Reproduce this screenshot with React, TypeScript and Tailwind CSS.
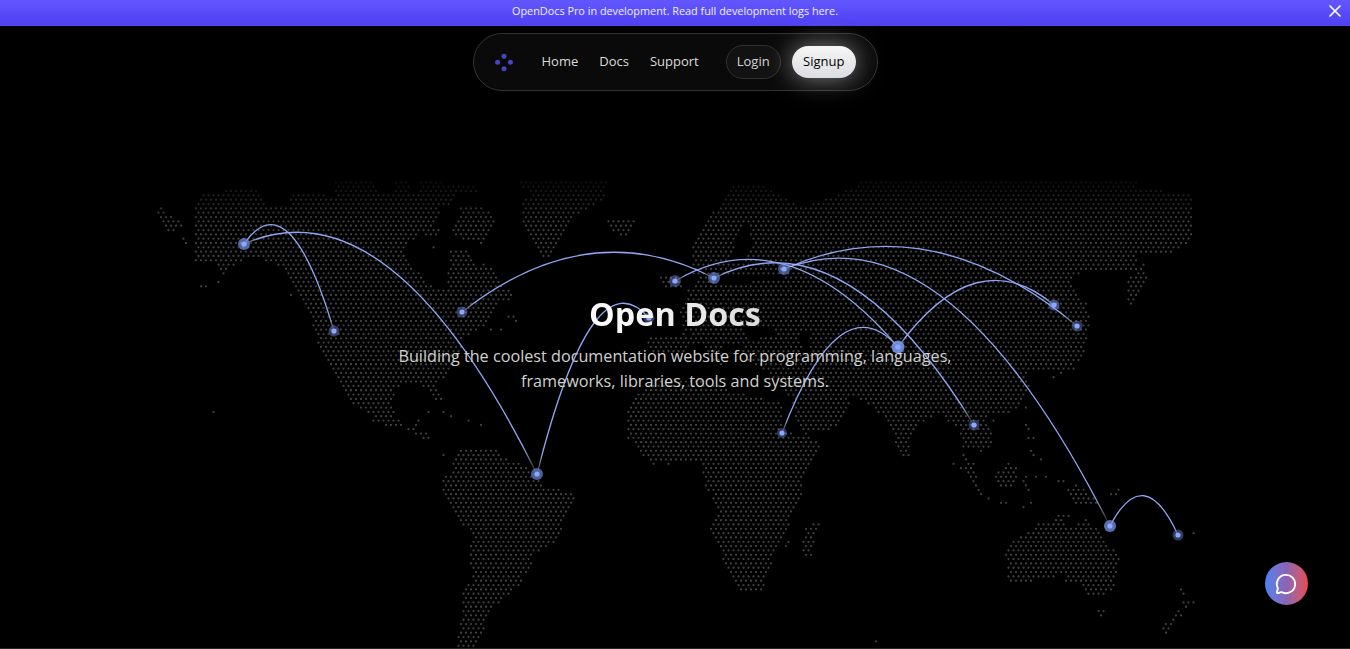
import { MessageCircle, X } from "lucide-react";

type Pt = [number, number];
type View = [number, number, number, number];

const Z8: View = [150, 170, 2.851, 3];
const Z9: View = [600, 170, 2.57, 3];
const Z10: View = [600, 400, 2.57, 3];
const Z6: View = [420, 430, 3, 3];
const Z5: View = [860, 170, 3, 3];
const Z11: View = [620, 180, 3, 3];
const Z12: View = [860, 340, 3, 3];
const S: View = [0, 0, 1, 1];

const P = (v: View, pts: Pt[]): Pt[] => pts.map(([x, y]) => [v[0] + x / v[2], v[1] + y / v[3]]);

const land: Pt[][] = [
  // North America
  P(Z8, [[160,65],[310,60],[330,110],[395,110],[400,70],[500,70],[510,90],[530,85],[530,35],[640,35],[650,70],[690,75],[700,35],[740,35],[745,75],[770,75],[765,35],[930,40],[940,70],[870,75],[850,110],[830,110],[825,135],[800,170],[740,215],[720,235],[760,300],[790,345],[845,355],[850,300],[855,240],[905,240],[930,290],[960,280],[990,320],[1030,370],[1035,400],[1000,400],[960,470],[910,490],[890,520],[880,560],[860,600],[830,630],[815,650],[835,690],[820,695],[790,650],[740,640],[700,655],[690,700],[700,740],[720,765],[760,775],[790,790],[810,800],[780,810],[740,780],[690,770],[640,760],[630,735],[570,700],[530,620],[480,540],[470,480],[450,410],[410,345],[385,295],[310,265],[270,270],[225,290],[215,320],[195,285],[125,270],[130,215],[125,165],[130,100]]),
  P(Z8, [[1015,420],[1060,460],[1040,460],[1020,440]]),
  P(Z8, [[750,745],[780,740],[760,770]]),
  P(Z8, [[780,175],[825,175],[825,205],[780,205]]),
  P(Z8, [[20,100],[40,125],[90,150],[95,165],[70,185],[50,180],[25,150]]),
  // Greenland, Iceland, Baffin
  P(Z8, [[1045,35],[1310,35],[1290,90],[1220,130],[1190,180],[1140,260],[1110,260],[1090,210],[1060,170],[1060,100],[1090,70]]),
  P(Z8, [[1305,150],[1380,150],[1380,175],[1345,205],[1315,180]]),
  P(Z8, [[860,175],[890,130],[880,110],[950,110],[985,145],[960,190],[945,220],[900,210],[860,190]]),
  // South America
  P(Z6, [[110,75],[130,50],[230,60],[265,90],[320,110],[345,140],[370,170],[420,180],[465,195],[460,220],[430,260],[430,295],[410,330],[400,345],[340,370],[335,400],[310,440],[300,465],[270,490],[240,515],[210,540],[195,570],[185,630],[160,660],[110,660],[115,600],[125,560],[130,490],[155,450],[150,380],[155,320],[140,295],[105,255],[85,225],[65,190],[70,150],[95,115]]),
  // Africa
  P(S, [[627,412],[639,393],[650,383],[682,377],[715,384],[735,392],[770,400],[782,400],[781,430],[812,438],[822,447],[816,455],[810,468],[803,480],[803,497],[791,520],[790,540],[784,550],[790,530],[793,523],[778,547],[769,570],[762,590],[737,590],[729,570],[717,547],[709,527],[717,513],[713,497],[704,483],[703,472],[703,463],[650,463],[643,455],[634,441],[627,440]]),
  P(Z10, [[560,360],[570,375],[550,420],[545,465],[520,465],[525,380]]),
  // Arabia
  P(Z10, [[495,0],[640,0],[635,40],[615,75],[585,90],[520,105],[500,65]]),
  // Eurasia
  P(Z9, [[235,240],[290,130],[340,50],[360,40],[420,40],[480,90],[525,110],[560,95],[690,35],[1380,35],[1380,300],[240,320]]),
  P(Z5, [[30,30],[760,30],[830,50],[930,65],[1000,70],[1000,215],[970,230],[930,250],[870,245],[830,260],[760,280],[690,285],[640,330],[640,360],[680,400],[690,440],[680,500],[670,560],[610,610],[560,600],[0,600],[0,30]]),
  P(Z12, [[0,0],[530,0],[490,70],[510,130],[490,190],[440,220],[380,225],[400,310],[370,335],[305,320],[300,270],[260,245],[250,220],[220,225],[185,245],[150,290],[150,360],[125,350],[100,290],[85,250],[60,220],[0,170]]),
  P(S, [[690,290],[1000,250],[1000,345],[880,413],[868,402],[850,396],[840,405],[795,400],[785,395],[772,375],[745,360],[742,345],[722,345],[722,365],[712,360],[703,347],[690,345]]),
  P(S, [[647,338],[686,333],[690,345],[680,355],[650,355]]),
  P(Z11, [[110,280],[170,280],[190,320],[130,320]]),
  P(Z11, [[205,330],[250,280],[280,260],[300,400],[220,450],[190,470],[180,400]]),
  // South East Asia
  P(Z12, [[305,330],[325,345],[360,440],[390,480],[370,475],[335,420],[300,350]]),
  P(Z12, [[445,370],[480,375],[470,420],[450,450],[410,440],[395,410]]),
  P(Z12, [[490,420],[510,440],[515,460],[495,460],[490,445]]),
  P(Z12, [[620,440],[650,435],[700,470],[720,490],[680,490],[645,490]]),
  P(Z5, [[850,270],[860,320],[815,410],[800,380],[800,340]]),
  // Australia
  P(Z10, [[1175,345],[1205,345],[1190,370],[1220,380],[1250,345],[1260,370],[1290,395],[1300,425],[1335,470],[1330,530],[1310,580],[1250,595],[1230,555],[1200,550],[1190,525],[1120,540],[1050,555],[1045,490],[1040,460],[1060,420],[1100,400],[1120,370],[1165,365]]),
];

const holes: Pt[][] = [
  P(S, [[745,328],[775,326],[775,336],[750,340]]),
  P(S, [[798,330],[808,330],[812,355],[803,355]]),
  P(Z11, [[350,180],[380,120],[395,190],[370,240],[330,250]]),
];

const strays: Pt[] = [
  ...P(Z8, [[90,205],[98,215],[145,355],[165,345],[190,330],[205,315],[180,728],[800,730],[830,730],[865,745],[905,755],[945,770],[975,485],[1000,485],[830,855],[405,370],[450,420],[810,228]]),
  ...P(Z10, [[1520,398],[708,730],[1310,283],[1330,270],[1325,283],[140,190],[175,190],[1280,628],[1293,628],[1286,640],[1490,565],[1495,580],[1497,603],[1510,603],[1520,603],[1502,615],[1485,628],[1478,640],[1488,640],[1470,655],[1462,668],[1450,668],[1443,680],[1458,680],[1450,692],[1145,230],[1185,243],[1090,320]]),
  ...P(Z12, [[680,0],[670,40],[660,65],[640,90],[620,90],[605,100],[580,115],[500,205],[405,245],[500,255],[505,270],[510,295],[525,300],[515,335],[525,345],[540,355],[285,375],[300,385],[320,400],[335,380],[345,375],[595,425],[610,425],[500,410],[525,410],[555,410],[430,490],[440,490],[490,500],[510,490],[600,525],[625,525],[750,465],[770,465]]),
];

const inside = (x: number, y: number, poly: Pt[]) => {
  let c = false;
  for (let i = 0, j = poly.length - 1; i < poly.length; j = i++) {
    const [xi, yi] = poly[i];
    const [xj, yj] = poly[j];
    if (yi > y !== yj > y && x < ((xj - xi) * (y - yi)) / (yj - yi) + xi) c = !c;
  }
  return c;
};

const DX = 5;
const DY = 4.33;
const Y0 = 485.5;
const X0 = 521;
const rowX = (k: number) => X0 + (((k % 2) + 2) % 2 ? 2.5 : 0);

const buildDots = () => {
  const out: Pt[] = [];
  for (let k = -72; k <= 38; k++) {
    const y = Y0 + k * DY;
    for (let j = -74; j <= 136; j++) {
      const x = rowX(k) + j * DX;
      if (land.some((p) => inside(x, y, p)) && !holes.some((p) => inside(x, y, p))) out.push([x, y]);
    }
  }
  strays.forEach(([x, y]) => {
    const k = Math.round((y - Y0) / DY);
    const j = Math.round((x - rowX(k)) / DX);
    out.push([rowX(k) + j * DX, Y0 + k * DY]);
  });
  return out;
};
const dots = buildDots();
const dotsPath = dots.map(([x, y]) => `M${x - 1.15} ${y.toFixed(2)}a1.15 1.15 0 1 0 2.3 0a1.15 1.15 0 1 0 -2.3 0`).join("");

const N = {
  alaska: [244, 244] as Pt,
  la: [334, 331] as Pt,
  brazil: [537, 474] as Pt,
  lisbon: [649, 318] as Pt,
  ny: [462, 312] as Pt,
  london: [675, 281] as Pt,
  berlin: [714, 278] as Pt,
  moscow: [784, 269] as Pt,
  delhi: [898, 347] as Pt,
  nairobi: [782, 433] as Pt,
  bangkok: [974, 425] as Pt,
  beijing: [1054, 305] as Pt,
  shanghai: [1077, 326] as Pt,
  sydney: [1110, 526] as Pt,
  fiji: [1178, 535] as Pt,
};

const edges: [Pt, Pt][] = [
  [N.alaska, N.la],
  [N.alaska, N.brazil],
  [N.brazil, N.lisbon],
  [N.ny, N.berlin],
  [N.london, N.delhi],
  [N.berlin, N.bangkok],
  [N.moscow, N.shanghai],
  [N.moscow, N.sydney],
  [N.delhi, N.beijing],
  [N.nairobi, N.delhi],
  [N.sydney, N.fiji],
];

const halos: [Pt, number, number][] = [
  [N.alaska, 6, 0.65],
  [N.la, 5.5, 0.38],
  [N.brazil, 6, 0.6],
  [N.lisbon, 5.5, 0.38],
  [N.ny, 5.5, 0.38],
  [N.london, 6, 0.4],
  [N.berlin, 6, 0.55],
  [N.moscow, 6, 0.55],
  [N.delhi, 6.5, 0.85],
  [N.nairobi, 5, 0.35],
  [N.bangkok, 5.5, 0.35],
  [N.beijing, 5.5, 0.5],
  [N.shanghai, 5.5, 0.38],
  [N.sydney, 6, 0.7],
  [N.fiji, 5.5, 0.38],
];

function WorldMap() {
  return (
    <div className="absolute inset-0 overflow-hidden">
      <svg width="1350" height="649" viewBox="0 0 1350 649" className="block">
        <defs>
          <linearGradient id="arc" x1="0" y1="0" x2="1" y2="0">
            <stop offset="0" stopColor="#ffffff" stopOpacity="0" />
            <stop offset="0.05" stopColor="#8fa6f2" />
            <stop offset="0.95" stopColor="#8fa6f2" />
            <stop offset="1" stopColor="#ffffff" stopOpacity="0" />
          </linearGradient>
          <linearGradient id="fade" x1="0" y1="170" x2="0" y2="688" gradientUnits="userSpaceOnUse">
            <stop offset="0" stopColor="#fff" stopOpacity="0" />
            <stop offset="0.1" stopColor="#fff" />
            <stop offset="1" stopColor="#fff" />
          </linearGradient>
          <mask id="mapFade" maskUnits="userSpaceOnUse" x="0" y="0" width="1350" height="649">
            <rect x="0" y="0" width="1350" height="649" fill="url(#fade)" />
          </mask>
        </defs>
        <path d={dotsPath} fill="#ffffff" fillOpacity="0.25" mask="url(#mapFade)" />
        {edges.map(([a, b], i) => (
          <path
            key={i}
            d={`M${a[0]} ${a[1]}Q${(a[0] + b[0]) / 2} ${Math.min(a[1], b[1]) - 65} ${b[0]} ${b[1]}`}
            fill="none"
            stroke="url(#arc)"
            strokeWidth="1.3"
          />
        ))}
        {halos.map(([p, r, o], i) => (
          <g key={i}>
            <circle cx={p[0]} cy={p[1]} r={r} fill="#7f9cf5" fillOpacity={o} />
            <circle cx={p[0]} cy={p[1]} r="2.6" fill="#8aa8ff" />
          </g>
        ))}
      </svg>
    </div>
  );
}

function Logo() {
  return (
    <svg width="20" height="20" viewBox="0 0 20 20" fill="#4744c4">
      <circle cx="10" cy="4.2" r="2.5" />
      <circle cx="3.6" cy="10.3" r="2.5" />
      <circle cx="16.4" cy="10.3" r="2.5" />
      <circle cx="10" cy="16.8" r="2.5" />
    </svg>
  );
}

export default function App() {
  return (
    <div
      className="relative h-[649px] overflow-hidden bg-black border-b border-[#262626] text-white"
      style={{ fontFamily: '"Open Sans", sans-serif' }}
    >
      <WorldMap />
      <div className="relative flex h-[26px] items-center justify-center bg-gradient-to-b from-[#6257ff] to-[#4f3ff0] pb-[4px]">
        <span className="text-[10.85px] font-medium text-[#f1f0ff]">OpenDocs Pro in development. Read full development logs here.</span>
        <button className="absolute right-[5px] top-[1px] text-white">
          <X size={20} strokeWidth={2} />
        </button>
      </div>
      <div className="relative mt-[7px] flex justify-center">
        <nav className="flex h-[58px] w-[405px] items-center rounded-full border border-[#333333] bg-[#0a0a0a] pl-[20px]">
          <Logo />
          <div className="ml-[28px] flex items-center gap-[21px] text-[13px] text-[#dcdcdc]">
            <a>Home</a>
            <a>Docs</a>
            <a>Support</a>
          </div>
          <button className="ml-[27px] h-[34px] w-[55px] rounded-full border border-[#303030] bg-[#121212] text-[13px] text-[#d4d4d4]">Login</button>
          <button className="ml-[11px] h-[32px] w-[64px] rounded-full bg-gradient-to-b from-[#f5f5f5] to-[#dcdde2] text-[13px] font-medium text-black shadow-[0_0_26px_rgba(255,255,255,0.5)]">Signup</button>
        </nav>
      </div>
      <main className="relative flex flex-col items-center pt-[202px]">
        <h1 className="bg-gradient-to-r from-white to-[#dcdcdc] bg-clip-text text-[32.4px] font-bold leading-[40px] text-transparent">Open Docs</h1>
        <p className="mt-[11px] w-[570px] text-center text-[16.2px] leading-[25px] text-[#d0d0d0]">
          Building the coolest documentation website for programming, languages, frameworks, libraries, tools and systems.
        </p>
      </main>
      <button className="absolute left-[1265px] top-[562px] flex h-[43px] w-[43px] items-center justify-center rounded-full bg-gradient-to-r from-[#4a82f0] via-[#8a63b4] to-[#e8474a] text-white">
        <span className="-ml-[2px] flex">
          <MessageCircle size={22} strokeWidth={2} />
        </span>
      </button>
    </div>
  );
}
